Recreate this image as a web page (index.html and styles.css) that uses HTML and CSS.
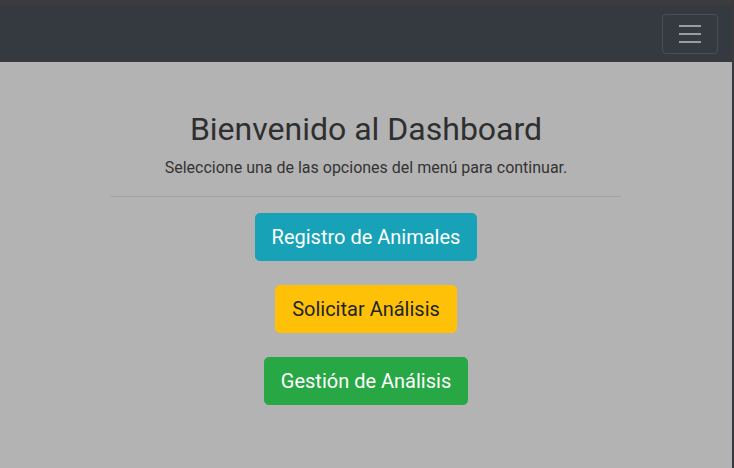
FILE: index.html
```html
<!DOCTYPE html>
<html lang="es">
<head>
<meta charset="utf-8">
<title>Dashboard</title>
<link rel="stylesheet" href="styles.css">
</head>
<body>
<div class="topstrip"></div>
<nav class="navbar">
  <button class="toggler" type="button" aria-label="Menú">
    <svg width="30" height="30" viewBox="0 0 30 30"><path d="M4 7h22M4 15h22M4 23h22" stroke="rgba(255,255,255,0.5)" stroke-width="2" stroke-linecap="butt" fill="none"/></svg>
  </button>
</nav>
<main class="page">
  <div class="container">
    <h2 class="title">Bienvenido al Dashboard</h2>
    <p class="lead">Seleccione una de las opciones del menú para continuar.</p>
    <hr class="rule">
    <div class="actions">
      <a class="btn btn-info" href="#">Registro de Animales</a>
      <a class="btn btn-warning" href="#">Solicitar Análisis</a>
      <a class="btn btn-success" href="#">Gestión de Análisis</a>
    </div>
  </div>
</main>
</body>
</html>
```
FILE: styles.css
```css
* { box-sizing: border-box; }
html, body { margin: 0; padding: 0; }
body {
  background: #b3b3b3;
  font-family: Roboto, "Liberation Sans", sans-serif;
  color: #303030;
  min-height: 468px;
}
body::after {
  content: "";
  position: fixed;
  top: 0;
  right: 0;
  width: 2px;
  height: 100%;
  background: #3a3a3e;
}
.topstrip {
  height: 6px;
  background: #3c3c40;
}
.navbar {
  background: #343a40;
  padding: 8px 16px;
  display: flex;
  justify-content: flex-end;
}
.toggler {
  width: 56px;
  height: 40px;
  padding: 4px 12px;
  background: transparent;
  border: 1px solid rgba(255,255,255,0.1);
  border-radius: 4px;
  display: flex;
  align-items: center;
  justify-content: center;
}
.toggler svg { display: block; }
.page {
  margin-right: 2px;
  padding-top: 48px;
}
.container {
  width: 540px;
  margin: 0 auto;
  padding: 0 15px;
  text-align: center;
}
.title {
  margin: 0 0 8px;
  font-size: 32px;
  line-height: 1.2;
  font-weight: 400;
  color: #2f2f2f;
}
.lead {
  margin: 0 0 16px;
  font-size: 16px;
  line-height: 24px;
  color: #333333;
}
.rule {
  margin: 0 0 16px;
  border: 0;
  border-top: 1px solid #a1a1a1;
  height: 0;
}
.actions {
  display: flex;
  flex-direction: column;
  align-items: center;
  gap: 24px;
}
.btn {
  display: inline-block;
  padding: 8px 16px;
  font-size: 20px;
  line-height: 30px;
  border: 1px solid transparent;
  border-radius: 4.8px;
  text-decoration: none;
  font-weight: 400;
}
.btn-info { background: #17a2b8; border-color: #17a2b8; color: #fff; }
.btn-warning { background: #ffc107; border-color: #ffc107; color: #212529; }
.btn-success { background: #28a745; border-color: #28a745; color: #fff; }
```
